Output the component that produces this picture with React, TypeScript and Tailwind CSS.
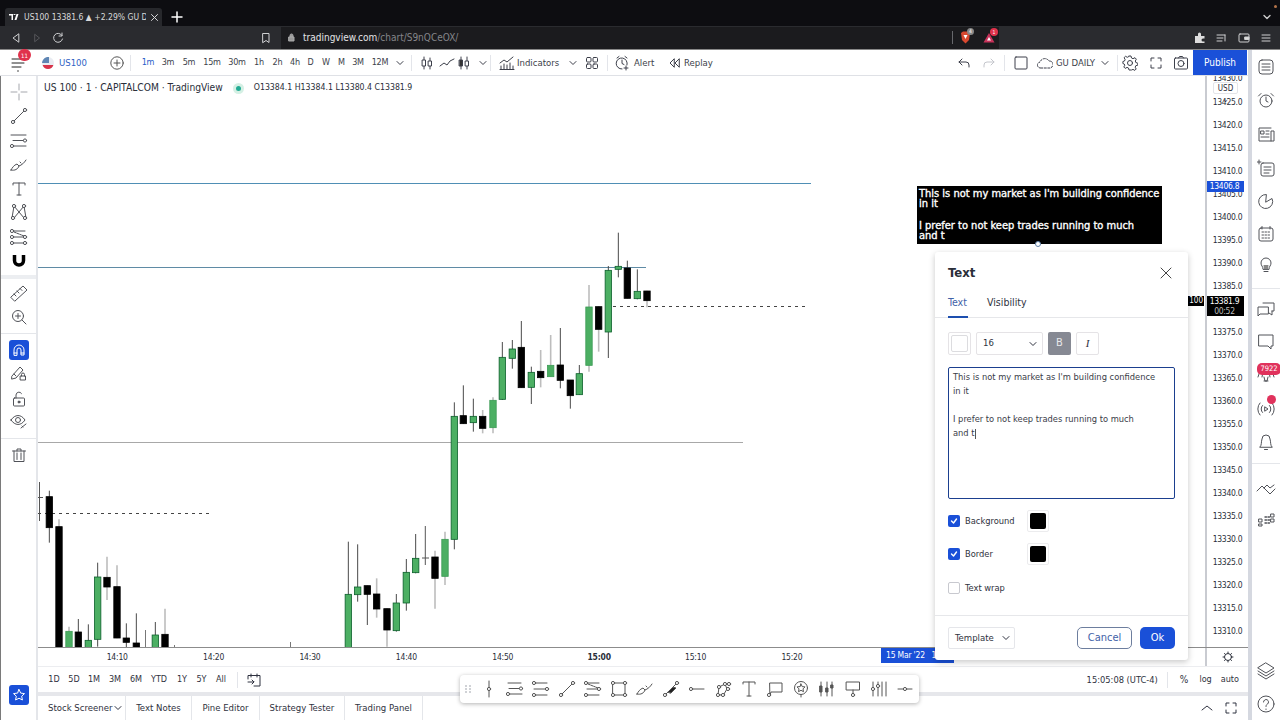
import React from "react";

const Ic = ({ s = 20, c = "", children, vb }: { s?: number; c?: string; children: React.ReactNode; vb?: string }) => (
  <svg width={s} height={s} viewBox={vb || `0 0 ${s} ${s}`} fill="none" stroke="currentColor" strokeWidth={1} strokeLinecap="round" strokeLinejoin="round" className={"shrink-0 " + c}>
    {children}
  </svg>
);
const Dot = ({ x, y, r = 1.6 }: { x: number; y: number; r?: number }) => <circle cx={x} cy={y} r={r} fill="#fff" />;

type C = [number, number, number, number, number, string, number?];
const zoomA: C[] = [
  [25, 935, 1250, 1093, 1260, "g"], [53, 943, 1115, 1071, 1094, "g"], [82, 1067, 1185, 1067, 1093, "b"], [110, 1045, 1163, 1092, 1137, "b", 1],
  [141, 1135, 1250, 1136, 1200, "b", 1], [169, 1092, 1205, 1119, 1202, "g"], [199, 987, 1142, 1027, 1119, "g"], [227, 912, 1030, 985, 1028, "g"],
  [285, 962, 1136, 981, 1045, "b", 1], [315, 905, 1065, 928, 1039, "g", 1], [343, 517, 958, 559, 928, "g"], [370, 466, 582, 557, 581, "b"],
  [400, 506, 605, 559, 578, "g"], [428, 540, 610, 559, 595, "b", 1], [459, 502, 610, 511, 593, "g", 1], [487, 336, 510, 382, 508, "g"],
  [517, 330, 416, 357, 385, "g"], [544, 273, 473, 352, 473, "b"], [574, 410, 522, 427, 472, "g"], [602, 360, 472, 424, 443, "b", 1],
  [632, 315, 440, 406, 440, "g", 1], [661, 294, 475, 405, 451, "b"], [691, 450, 536, 450, 497, "b"], [718, 405, 495, 431, 494, "g"],
  [747, 165, 425, 231, 406, "g", 1], [776, 228, 365, 230, 298, "b", 1], [805, 108, 384, 121, 306, "g"], [835, 8, 142, 109, 118, "g"],
  [862, 92, 205, 114, 205, "b"], [892, 118, 208, 184, 206, "g"], [921, 182, 232, 183, 212, "b", 1],
];
const zoomB: C[] = [
  [148, 32, 188, 50, 143, "b"], [177, 118, 510, 140, 510, "b", 1], [207, 440, 510, 454, 510, "g", 1], [235, 417, 510, 456, 510, "b"],
  [265, 433, 510, 481, 510, "g"], [293, 248, 500, 291, 478, "g"], [321, 230, 360, 292, 321, "b", 1], [351, 256, 475, 320, 474, "b", 1],
  [379, 430, 510, 474, 487, "b"], [409, 400, 510, 489, 510, "b"], [466, 426, 510, 465, 510, "g"], [495, 386, 510, 463, 510, "b", 1],
];
const candles: C[] = [
  ...zoomA.map(([x, a, b, d, e, k, l]) => [x / 3 + 340, a / 3 + 230, b / 3 + 230, d / 3 + 230, e / 3 + 230, k, l] as C),
  ...zoomB.map(([x, a, b, d, e, k, l]) => [x / 3, a / 3 + 480, b / 3 + 480, d / 3 + 480, e / 3 + 480, k, l] as C),
];

const Chart = () => (
  <svg viewBox="38 76 1167 571" className="block w-full h-full">
    <line x1="38" x2="811" y1="183.5" y2="183.5" stroke="#4f8fb5" />
    <line x1="38" x2="646" y1="267.5" y2="267.5" stroke="#5f8ba5" />
    <line x1="38" x2="743" y1="442.5" y2="442.5" stroke="#a8a8a8" />
    <line x1="613" x2="808" y1="306.5" y2="306.5" stroke="#444" strokeDasharray="3 4" />
    <line x1="38" x2="210" y1="513.5" y2="513.5" stroke="#444" strokeDasharray="3 4" />
    <path d="M39.500 482V521M38 497.500H43" stroke="#555" />
    <path d="M145.500 630V648M290.500 642V648M174.500 645V648" stroke="#777" />
    <path d="M425.300 526V565M422 558H429" stroke="#555" />
    {candles.map(([x, a, b, d, e, k, l], i) => (
      <g key={i}>
        <line x1={x} x2={x} y1={a} y2={b} stroke={l ? "#bdbdbd" : "#4a4a4a"} strokeWidth={l ? 1.6 : 1} />
        <rect x={x - 3.2} y={d} width={6.4} height={Math.max(e - d, 1)} fill={k === "g" ? "#4caf63" : "#000"} stroke={k === "g" ? (l ? "#3c9a55" : "#0b5f2b") : "#000"} strokeWidth={0.8} />
      </g>
    ))}
  </svg>
);

const Sep = ({ c = "" }: { c?: string }) => <div className={"w-px h-[16px] bg-[#e3e5ea] shrink-0 " + c} />;
const Chev = ({ c = "" }: { c?: string }) => (
  <Ic s={8} c={c}><path d="M1 2.500l3 3 3-3" /></Ic>
);

const TF: [string, string][] = [
  ["1m", "w-[20px] text-[#2a5cc8]"], ["3m", "w-[20px]"], ["5m", "w-[22px]"], ["15m", "w-[24px]"], ["30m", "w-[26px]"], ["1h", "w-[18px]"],
  ["2h", "w-[19px]"], ["4h", "w-[16px]"], ["D", "w-[15px]"], ["W", "w-[16px]"], ["M", "w-[15px]"], ["3M", "w-[18px]"], ["12M", "w-[26px]"],
];

const TopBar = () => (
  <div className="h-[26px] flex items-center bg-white border-b border-[#dfe1e6] text-[#3c3f4a] text-[9px] shrink-0 relative">
    <div className="w-[8px]" />
    <div className="w-[20px] flex justify-center text-[#222]">
      <Ic s={16}><path d="M2 4h12M2 8h12M2 12h9" /></Ic>
    </div>
    <div className="w-[14px]" />
    <svg width="12" height="12" viewBox="0 0 12 12" className="shrink-0">
      <circle cx="6" cy="6" r="6" fill="#e9ecf2" />
      <path d="M0.6 8h10.8A6 6 0 0 1 6 12 6 6 0 0 1 .6 8z" fill="#d8334a" />
      <path d="M1 3A6 6 0 0 1 7 0v6H0A6 6 0 0 1 1 3z" fill="#5f86b4" />
    </svg>
    <span className="ml-[5px] w-[51px] text-[9.500px] text-[#2f5fc4] pt-[1px]">US100</span>
    <div className="text-[#555]"><Ic s={14}><circle cx="7" cy="7" r="6.200" /><path d="M7 4v6M4 7h6" /></Ic></div>
    <div className="w-[6px]" /><Sep />
    <div className="w-[7px]" />
    {TF.map(([t, c]) => <span key={t} className={"text-center tracking-[-0.2px] pt-[1px] " + c}>{t}</span>)}
    <Chev c="ml-[3px]" />
    <div className="w-[7px]" /><Sep />
    <div className="w-[7px] " />
    <Ic s={16}><path d="M5 2v12M11 3v11" /><rect x="3.500" y="5" width="3" height="6" fill="#fff" /><rect x="9.500" y="6" width="3" height="5" fill="#fff" /></Ic>
    <div className="w-[4px]" />
    <Ic s={16}><path d="M1 11l4-3 3 2 3-4 4-2" /></Ic>
    <div className="w-[1px]" />
    <Ic s={16}><path d="M5 2v12M11 2v12" /><rect x="3.500" y="5" width="3" height="6" fill="#333" /><rect x="9.500" y="6" width="3" height="5" fill="#fff" /></Ic>
    <div className="w-[7px]" />
    <Chev />
    <div className="w-[3px]" /><Sep />
    <div className="w-[8px]" />
    <Ic s={16}><path d="M1 8l4-3 3 2 6-5M2 14v-3M5 14v-5M8 14v-4M11 14V8M14 14v-3M1 14.500h14" /></Ic>
    <span className="ml-[1px] w-[50px] text-[9.500px] pl-[1px] pt-[1px]">Indicators</span>
    <Chev c="ml-[3px]" />
    <div className="w-[8px]" />
    <Ic s={14}><rect x="1.500" y="1.500" width="4.500" height="4.500" rx="1" /><rect x="8" y="1.500" width="4.500" height="4.500" rx="1" /><rect x="1.500" y="8" width="4.500" height="4.500" rx="1" /><rect x="8" y="8" width="4.500" height="4.500" rx="1" /></Ic>
    <div className="w-[8px]" /><Sep />
    <div className="w-[6px]" />
    <Ic s={16}><path d="M13 10a5.500 5.500 0 1 0-5 4M8 5v3.500l2 1M3 3l2-1.500M13 3l-2-1.500M12 11v4M10 13h4" /></Ic>
    <span className="ml-[4px] w-[33px] text-[9.500px] pt-[1px]">Alert</span>
    <Ic s={14}><path d="M7 3L3 7l4 4zM12 3L8 7l4 4z" /></Ic>
    <span className="ml-[3px] text-[9.500px] pt-[1px]">Replay</span>
    <div className="ml-auto flex items-center h-full">
      <Ic s={14}><path d="M5 3L2 6l3 3M2 6h7a3 3 0 0 1 3 3v2" /></Ic>
      <div className="w-[11px]" />
      <Ic s={14} c="text-[#c4c6cc]"><path d="M9 3l3 3-3 3M12 6H5a3 3 0 0 0-3 3v2" /></Ic>
      <div className="w-[8px]" /><Sep />
      <div className="w-[9px]" />
      <Ic s={14}><rect x="1" y="1" width="12" height="12" rx="1" /></Ic>
      <div className="w-[9px]" />
      <Ic s={16}><path strokeDasharray="2 1.500" d="M4 13a3 3 0 0 1-1-6 5 5 0 0 1 9-1 3.500 3.500 0 0 1 1 7z" /></Ic>
      <span className="ml-[3px] text-[9.500px] pt-[1px]">GU DAILY</span>
      <Chev c="ml-[6px]" />
      <div className="w-[8px]" /><Sep />
      <div className="w-[4px]" />
      <Ic s={16}><circle cx="8" cy="8" r="2.500" /><path d="M7 1h2l.5 2 1.500.7 2-1 1.300 1.500-1 1.800.5 1.500 2 .7v2l-2 .5-.6 1.500 1 1.800-1.400 1.400-1.800-1-1.500.6L9 15H7l-.5-2-1.500-.6-1.800 1-1.400-1.400 1-1.800L2.200 9 .9 8.500v-2l1.600-.5.6-1.500-1-1.800L3.500 1.300l1.800 1 1.200-.6z" /></Ic>
      <div className="w-[10px]" />
      <Ic s={16}><path d="M3 6V3h3M10 3h3v3M13 10v3h-3M6 13H3v-3" /></Ic>
      <div className="w-[9px]" />
      <Ic s={16}><rect x="1.500" y="3" width="13" height="11" rx="1" /><circle cx="8" cy="8.500" r="3" /><path d="M5.500 3l1-1.500h3l1 1.500" /></Ic>
      <div className="w-[4px]" />
      <div className="w-[54px] h-full bg-[#1a50d8] text-white text-[10px] flex items-center justify-center">Publish</div>
      <div className="w-[1px]" />
    </div>
    <span className="absolute left-[18px] top-[-1px] w-[13px] h-[12px] rounded-full bg-[#e0324c] text-white text-[6px] flex items-center justify-center">11</span>
    <span className="absolute left-[17px] top-[20px] w-[2px] h-[2px] rounded-full bg-[#888]" />
  </div>
);

const LeftBtn = ({ h, children, c = "" }: { h: string; children: React.ReactNode; c?: string }) => (
  <div className={"flex items-center justify-center shrink-0 " + h + " " + c}>{children}</div>
);

const LeftRail = () => (
  <div className="w-[38px] shrink-0 flex flex-col bg-white border-l border-[#7a7a7a] border-r-2 border-r-[#e4e6ea] text-[#505258] relative">
    <LeftBtn h="h-[24px] mt-[4px]" c="text-[#a5a7ad]"><Ic s={18}><path d="M9 1v6M9 11v6M1 9h6M11 9h6" /></Ic></LeftBtn>
    <LeftBtn h="h-[24px]"><Ic s={18}><path d="M3 15L15 3" /><Dot x={3} y={15} /><Dot x={15} y={3} /></Ic></LeftBtn>
    <LeftBtn h="h-[25px]"><Ic s={18}><path d="M1 3h15M3 8.500h11M3 14h13" /><Dot x={15} y={8.500} /><Dot x={2} y={14} /></Ic></LeftBtn>
    <LeftBtn h="h-[24px]"><Ic s={18}><path d="M1 14c4 1 7-1 8-4L7 8C4 9 2 12 1 14zM9 10c3-1 5-3 7-6M10 6l1 1" /></Ic></LeftBtn>
    <LeftBtn h="h-[23px]"><Ic s={16}><path d="M2 4V2h12v2M8 2v12M6 14h4" /></Ic></LeftBtn>
    <LeftBtn h="h-[24px]"><Ic s={18}><path d="M4 3l10 12M14 3L4 15M4 3L2 15M14 3l2 12" /><Dot x={4} y={3} /><Dot x={14} y={3} /><Dot x={3} y={15} /><Dot x={15} y={15} /></Ic></LeftBtn>
    <LeftBtn h="h-[25px]"><Ic s={18}><path d="M3 3h12M3 9h12M3 15h12" /><path d="M4 4l10 4" strokeDasharray="2 1" /><Dot x={2} y={3} /><Dot x={2} y={9} /><Dot x={2} y={15} /><Dot x={15} y={9} /><Dot x={15} y={15} /></Ic></LeftBtn>
    <LeftBtn h="h-[24px]"><svg width="14" height="14" viewBox="0 0 14 14" fill="none"><path d="M2.500 1v5.500a4.500 4.500 0 0 0 9 0V1" stroke="#000" strokeWidth="3.500" /></svg></LeftBtn>
    <div className="h-[4px] bg-[#eceef1] mt-[2px] shrink-0" />
    <LeftBtn h="h-[28px]"><Ic s={20}><path d="M2 14L14 3l4 4L6 18zM5 11l2 2M8 8l2 2M11 5.500l2 2" /></Ic></LeftBtn>
    <LeftBtn h="h-[20px]"><Ic s={16}><circle cx="7" cy="7" r="5.500" /><path d="M7 4.500v5M4.500 7h5M11 11l4 4" /></Ic></LeftBtn>
    <div className="h-px bg-[#e4e6ea] mt-[6px] shrink-0" />
    <LeftBtn h="h-[20px] mt-[6px]"><div className="w-[20px] h-[20px] rounded-[3px] bg-[#1a50d8] flex items-center justify-center text-white"><Ic s={14}><path d="M2 12V7a5 5 0 0 1 10 0v5H9V7a2 2 0 0 0-4 0v5zM2 10h3M9 10h3" /></Ic></div></LeftBtn>
    <LeftBtn h="h-[26px]"><Ic s={18}><path d="M2 12L10 3l3 3-7 8-4 1zM4 10l2 2" /><rect x="10.500" y="12" width="5" height="4" /><path d="M11.500 12v-1.500a1.500 1.500 0 0 1 3 0V12" /></Ic></LeftBtn>
    <LeftBtn h="h-[26px]"><Ic s={16}><rect x="2.500" y="7" width="11" height="8" rx="1" /><path d="M5 7V4a3 3 0 0 1 5.500-1.500" /><circle cx="8" cy="11" r="1" fill="currentColor" /></Ic></LeftBtn>
    <LeftBtn h="h-[18px]"><Ic s={18}><path d="M1 8c4-6 10-6 14 0-4 6-10 6-14 0z" /><circle cx="8" cy="8" r="2.500" /><path d="M11 16l5-4M12 14l1 1" /></Ic></LeftBtn>
    <div className="h-px bg-[#e4e6ea] mt-[8px] shrink-0" />
    <LeftBtn h="h-[32px]"><Ic s={16}><path d="M3 4v10.500h10V4M1.500 4h13M6 4V2h4v2M6 6v6.500M10 6v6.500" /></Ic></LeftBtn>
    <div className="flex-1" />
    <LeftBtn h="h-[20px] mb-[15px]"><div className="w-[20px] h-[20px] rounded-[3px] bg-[#1a50d8] flex items-center justify-center text-white"><Ic s={14}><path d="M7 1.500l1.700 3.600 3.800.5-2.800 2.600.7 3.800L7 10.200 3.600 12l.7-3.800L1.500 5.600l3.800-.5z" /></Ic></div></LeftBtn>
  </div>
);

const RightRail = () => (
  <div className="w-[28px] shrink-0 flex flex-col bg-white text-[#505258] items-center">
    <LeftBtn h="h-[33px]"><Ic s={18}><rect x="2" y="2" width="14" height="14" rx="3" /><path d="M5 6h8M5 9h8M5 12h8" /></Ic></LeftBtn>
    <LeftBtn h="h-[34px]"><Ic s={18}><circle cx="9" cy="10" r="6" /><path d="M9 6v4l2 1M1.500 5L4 2.500M16.500 5L14 2.500" /></Ic></LeftBtn>
    <LeftBtn h="h-[34px]"><Ic s={18}><path d="M14 3H2v13h15V6h-3v10" /><path d="M4 6h3v3H4zM9 6h3M9 9h3M4 12h8" /></Ic></LeftBtn>
    <LeftBtn h="h-[33px]"><Ic s={18}><rect x="4" y="4" width="13" height="13" rx="2" /><path d="M7 8h7M7 11h7M7 14h5M2 1v4M0 3h4" /></Ic></LeftBtn>
    <LeftBtn h="h-[33px]"><Ic s={18}><path d="M9 2.500a7 7 0 1 0 6 4L9 10z" /></Ic></LeftBtn>
    <LeftBtn h="h-[33px]"><Ic s={18}><rect x="2" y="3" width="14" height="13" rx="2" /><path d="M5 1.500V4M13 1.500V4" /><path strokeDasharray="1.500 1.500" d="M5 7h9M5 10h9M5 13h9" /></Ic></LeftBtn>
    <LeftBtn h="h-[30px]"><Ic s={18}><path d="M6 13c0-3-2-3-2-6a5 5 0 0 1 10 0c0 3-2 3-2 6zM7 15.500h4" /><path d="M6.500 9h5l-.500 4H7z" fill="#888" stroke="none" /></Ic></LeftBtn>
    <div className="w-full h-px bg-[#e4e6ea] mt-[8px] shrink-0" />
    <LeftBtn h="h-[32px] mt-[5px]"><Ic s={20}><path d="M7 3h11v8h-2M12 7H2v9l2-2h8z" /><path d="M16 11v4l-3-2" /></Ic></LeftBtn>
    <LeftBtn h="h-[32px]"><Ic s={18}><path d="M2 2h14v11h-2v3l-3-3H2z" /></Ic></LeftBtn>
    <LeftBtn h="h-[30px] relative"><Ic s={20}><path d="M4 8l-2 6M7 9l-1 5M13 9l1 5M16 8l2 6M8 14l1 4h2l1-4M8 18h4" /></Ic><span className="absolute left-[1px] top-[5px] w-[24px] h-[12px] rounded-[5px] bg-[#e0325c] text-white text-[7.500px] leading-[12px] text-center">7922</span></LeftBtn>
    <LeftBtn h="h-[42px] relative"><Ic s={20}><path d="M4 4a9 9 0 0 0 0 12M16 4a9 9 0 0 1 0 12M6.500 6.500a5 5 0 0 0 0 7M13.500 6.500a5 5 0 0 1 0 7M9 8l3 2-3 2z" /></Ic><span className="absolute right-[0px] top-[7px] w-[9px] h-[9px] rounded-full bg-[#e0325c]" /></LeftBtn>
    <LeftBtn h="h-[26px]"><Ic s={18}><path d="M3 13c2-2 1-5 2-8a4 4 0 0 1 8 0c1 3 0 6 2 8zM7.500 15.500h3" /></Ic></LeftBtn>
    <div className="w-full h-px bg-[#e4e6ea] mt-[7px] shrink-0" />
    <LeftBtn h="h-[26px] mt-[14px]"><Ic s={20}><path d="M1 10l5-5 5 5M8 7l3-3 3 3 4-3M11 10l3 3 5-5" /></Ic></LeftBtn>
    <LeftBtn h="h-[27px]"><Ic s={18}><path strokeDasharray="1.500 1.500" strokeWidth={1.400} d="M8 8h5M8 11h5M8 14h5" /><rect x="14" y="5" width="3" height="3" /><rect x="14" y="10" width="3" height="3" /><rect x="2" y="10" width="3" height="3" /><rect x="2" y="15" width="3" height="2" /></Ic></LeftBtn>
    <div className="flex-1" />
    <LeftBtn h="h-[34px]"><Ic s={20}><path d="M10 2l8 5-8 5-8-5zM2 10l8 5 8-5M2 13l8 5 8-5" /></Ic></LeftBtn>
    <LeftBtn h="h-[32px]"><Ic s={20}><circle cx="10" cy="10" r="8" /><path d="M7.500 8a2.500 2.500 0 1 1 4 2c-1 .7-1.500 1-1.500 2.500M10 15v.5" /></Ic></LeftBtn>
  </div>
);

const prices = Array.from({ length: 24 }, (_, i) => (13425 - i * 5).toFixed(1));
const times = ["14:10", "14:20", "14:30", "14:40", "14:50", "15:00", "15:10", "15:20"];
const ranges: [string, string][] = [
  ["1D", "w-[20px]"], ["5D", "w-[20px]"], ["1M", "w-[20px]"], ["3M", "w-[22px]"], ["6M", "w-[20px]"], ["YTD", "w-[26px]"], ["1Y", "w-[20px]"], ["5Y", "w-[19px]"], ["All", "w-[20px]"],
];
const tabs: [string, string][] = [
  ["Text Notes", "w-[66px]"], ["Pine Editor", "w-[68px]"], ["Strategy Tester", "w-[85px]"], ["Trading Panel", "w-[78px]"],
];

const floatIcons: React.ReactNode[] = [
  <><path d="M9 1v16" /><Dot x={9} y={9} /></>,
  <><path d="M2 3h13M3 8.500h11M3 14h13" /><Dot x={15} y={8.500} /><Dot x={2} y={14} /></>,
  <><path d="M2 3h13M2 15h13M2 9h13" /><Dot x={2} y={3} /><Dot x={15} y={9} /><Dot x={2} y={15} /></>,
  <><path d="M3 15L15 3" /><Dot x={3} y={15} /><Dot x={15} y={3} /></>,
  <><path d="M3 3h12M3 9h12M3 15h12" /><path d="M4 4l10 4" strokeDasharray="2 1" /><Dot x={2} y={3} /><Dot x={15} y={9} /><Dot x={2} y={15} /></>,
  <><rect x="3" y="3" width="12" height="12" /><Dot x={3} y={3} /><Dot x={15} y={3} /><Dot x={3} y={15} /><Dot x={15} y={15} /></>,
  <><path d="M1 14c4 1 7-1 8-4L7 8C4 9 2 12 1 14zM9 10c3-1 5-3 7-6M10 6l1 1" /></>,
  <><path d="M3 15L15 3" /><path d="M6 12l6-6-1 1 3 1-5 5z" fill="#222" /><Dot x={3} y={15} /><Dot x={15} y={3} /></>,
  <><path d="M3 9h13" /><Dot x={3} y={9} /></>,
  <><path d="M4 15l1-8 6-3 2 5-3 5z" /><Dot x={4} y={15} /><Dot x={5} y={7} /><Dot x={11} y={4} /><Dot x={15} y={4} /><Dot x={14} y={9} /><Dot x={9} y={15} /></>,
  <><path d="M3 4V2h12v2M9 2v14M7 16h4" /></>,
  <><path d="M4 3h12v9H5l-1 3z" /><Dot x={3} y={15} /></>,
  <><circle cx="9" cy="8" r="6.500" /><path d="M9 4l1.200 2.600 2.800.3-2 2 .5 2.800L9 10.300 6.500 11.700 7 8.900l-2-2 2.800-.3zM9 14.500V17" /></>,
  <><path d="M3 2v14M9 2v14M14 2v14" /><rect x="2" y="6" width="2" height="6" fill="#555" /><rect x="8" y="8" width="2" height="4" fill="#555" /><rect x="13" y="5" width="2" height="3" fill="#555" /></>,
  <><rect x="2.500" y="2" width="13" height="8" /><path d="M9 10v5" /><Dot x={9} y={15} /></>,
  <><path d="M3 2v14M8 2v14M12 2v14M16 2v14" /><Dot x={3} y={9} /><Dot x={8} y={6} /></>,
  <><path d="M2 9h14" /><Dot x={9} y={9} /></>,
];

function Check({ on }: { on?: boolean }) {
  return on ? (
    <div className="w-[12px] h-[12px] rounded-[2px] bg-[#1a50d8] flex items-center justify-center text-white"><Ic s={8}><path d="M1.500 4l2 2 3-4" strokeWidth={1.400} /></Ic></div>
  ) : <div className="w-[12px] h-[12px] rounded-[2px] border border-[#c8c9cf]" />;
}
function Swatch() {
  return <div className="w-[22px] h-[22px] border border-[#ececee] rounded-[2px] flex items-center justify-center"><div className="w-[16px] h-[16px] rounded-[2px] bg-black" /></div>;
}

const Dialog = () => (
  <div className="absolute left-[935px] top-[252px] w-[253px] h-[408px] bg-white rounded-[3px] shadow-[0_2px_6px_rgba(0,0,0,0.22)] flex flex-col text-[#2f3240]">
    <div className="h-[41px] flex items-center justify-between pl-[13px] pr-[15px] shrink-0">
      <span className="text-[13px] font-bold text-[#2a2e39]">Text</span>
      <Ic s={14} c="text-[#444]"><path d="M2 2l10 10M12 2L2 12" /></Ic>
    </div>
    <div className="h-[25px] flex items-start pl-[13px] border-b border-[#e6e7ea] text-[10.500px] shrink-0 relative pt-[2px]">
      <span className="text-[#3f62a8] w-[39px]">Text</span>
      <span>Visibility</span>
      <span className="absolute left-[13px] bottom-[-1px] w-[20px] h-[2px] bg-[#1d4faf]" />
    </div>
    <div className="flex items-center gap-[5px] pl-[13px] mt-[14px] shrink-0">
      <div className="w-[23px] h-[23px] border border-[#e5e3e6] rounded-[2px] flex items-center justify-center"><div className="w-[17px] h-[17px] border border-[#dcdcdf] rounded-[2px]" /></div>
      <div className="w-[67px] h-[23px] border border-[#e5e3e6] rounded-[2px] flex items-center justify-between pl-[6px] pr-[4px] text-[9.500px]"><span>16</span><Ic s={10}><path d="M2 3.500l3 3 3-3" /></Ic></div>
      <div className="w-[23px] h-[23px] bg-[#868993] rounded-[2px] text-[#e8e8ea] text-[11px] flex items-center justify-center">B</div>
      <div className="w-[23px] h-[23px] border border-[#e5e3e6] rounded-[2px] text-[11px] flex items-center justify-center font-['Liberation_Serif'] italic">I</div>
    </div>
    <div className="ml-[13px] mt-[12px] w-[227px] h-[132px] border-[1.500px] border-[#1b3f8f] rounded-[2px] pl-[4px] pt-[2px] text-[9.250px] leading-[14px] shrink-0 text-[#3a3d48] whitespace-nowrap">
      <p>This is not my market as I'm building confidence</p>
      <p>in it</p>
      <p className="h-[14px]" />
      <p>I prefer to not keep trades running to much</p>
      <p>and t<span className="inline-block w-px h-[10px] bg-[#555] align-middle" /></p>
    </div>
    <div className="flex items-center h-[22px] pl-[13px] mt-[11px] text-[9.250px] shrink-0">
      <Check on /><span className="ml-[5px] w-[62px]">Background</span><Swatch />
    </div>
    <div className="flex items-center h-[22px] pl-[13px] mt-[11px] text-[9.250px] shrink-0">
      <Check on /><span className="ml-[5px] w-[62px]">Border</span><Swatch />
    </div>
    <div className="flex items-center h-[22px] pl-[13px] mt-[12px] text-[9.250px] shrink-0">
      <Check /><span className="ml-[5px]">Text wrap</span>
    </div>
    <div className="mt-auto h-[45px] border-t border-[#e6e7ea] flex items-center pl-[13px] pr-[13px] shrink-0">
      <div className="w-[67px] h-[22px] border border-[#e5e6ea] rounded-[2px] flex items-center justify-between pl-[6px] pr-[3px] text-[9.500px]"><span>Template</span><Ic s={10}><path d="M2 3.500l3 3 3-3" /></Ic></div>
      <div className="ml-auto w-[55px] h-[22px] border border-[#6d7e9e] rounded-[5px] flex items-center justify-center text-[11px] text-[#3f62a8]">Cancel</div>
      <div className="ml-[8px] w-[35px] h-[22px] bg-[#1a50d8] rounded-[5px] flex items-center justify-center text-[11px] text-white">Ok</div>
    </div>
  </div>
);

export default function App() {
  return (
    <div className="w-[1280px] h-[720px] relative overflow-hidden flex flex-col bg-white font-['DejaVu_Sans_Condensed','DejaVu_Sans',sans-serif] text-[#2f3240]">
      <div className="h-[26px] bg-[#0d0d11] flex items-end shrink-0 relative text-[#d8d8da]">
        <div className="ml-[5px] w-[157px] h-[18px] bg-[#27282c] rounded-t-[3px] flex items-center pl-[4px] text-[8.550px]">
          <svg width="11" height="7" viewBox="0 0 11 7" className="shrink-0"><path d="M0 0h4v6H2.500V1.500H0zM5.500 1a1 1 0 1 1 .01 0M7.500 0H9.500L7.500 6H5.500z" fill="#fff" /></svg>
          <span className="ml-[4px] w-[122px] whitespace-nowrap overflow-hidden">US100 13381.6 ▲ +2.29% GU D</span>
          <Ic s={9} c="ml-[4px]"><path d="M1.500 1.500l6 6M7.500 1.500l-6 6" /></Ic>
        </div>
        <Ic s={12} c="ml-[9px] mb-[3px] text-white"><path d="M6 1v10M1 6h10" strokeWidth={1.500} /></Ic>
        <div className="ml-auto mr-[8px] mb-[4px]"><Ic s={10} c="text-[#ccc]"><path d="M2 3.500l3 3 3-3" strokeWidth={1.400} /></Ic></div>
        <span className="absolute right-[3px] top-[5px] w-[3px] h-[3px] rounded-full bg-[#b5744a]" />
      </div>
      <div className="h-[23px] bg-[#2a2b2f] flex items-center shrink-0 text-[#cfd0d2]">
        <div className="w-[32px] flex justify-center"><Ic s={12}><path d="M8.500 2L3 6l5.500 4z" /></Ic></div>
        <div className="w-[10px] flex justify-center text-[#55565a]"><Ic s={10}><path d="M3 1.500L7.500 5 3 8.500z" /></Ic></div>
        <div className="w-[32px] flex justify-center"><Ic s={12}><path d="M10 3.500A4.500 4.500 0 1 0 10.500 7M10 1v3H7" /></Ic></div>
        <div className="w-[200px] flex justify-end pr-[2px]"><Ic s={12}><path d="M3 1.500h6v9l-3-2-3 2z" /></Ic></div>
        <div className="ml-[7px] w-[718px] h-[22px] bg-[#1b1b1e] flex items-center pl-[6px] text-[10px]">
          <Ic s={9} c="text-[#aaa]"><path d="M2 4h5v4H2zM3 4V2.500a1.500 1.500 0 0 1 3 0V4" fill="#999" /></Ic>
          <span className="ml-[7px] text-[#e4e4e6]">tradingview.com</span><span className="text-[#85868a]">/chart/S9nQCeOX/</span>
          <div className="ml-auto flex items-center pr-[4px]">
            <span className="w-px h-[13px] bg-[#67686c]" />
            <div className="relative ml-[7px] h-[13px]">
              <svg width="11" height="13" viewBox="0 0 11 13" className="block"><path d="M1 2l2-1.500h5L10 2l-1 7-3.500 3.500L2 9z" fill="#d9482f" /><path d="M3.500 4h4l-2 4z" fill="#fff" /></svg>
              <span className="absolute left-[7px] top-[-3px] w-[7px] h-[7px] rounded-full bg-[#888] text-white text-[5px] text-center leading-[7px]">4</span>
            </div>
            <div className="relative ml-[12px] h-[11px]">
              <svg width="12" height="11" viewBox="0 0 12 11" className="block"><path d="M6 1l5.500 9.500H.5z" fill="#c8325a" /><path d="M6 5l2 3.500H4z" fill="#fff" /></svg>
              <span className="absolute left-[7px] top-[-4px] w-[8px] h-[8px] rounded-full bg-[#e0324c] text-white text-[5px] text-center leading-[8px]">1</span>
            </div>
          </div>
        </div>
        <div className="ml-auto flex items-center pr-[8px]">
          <svg width="12" height="12" viewBox="0 0 12 12" className="shrink-0"><path d="M1 4h3V2a1.500 1.500 0 0 1 3 0v2h3.500v2.500H9a1.500 1.500 0 0 0 0 3h1.500V11H1z" fill="#ddd" /></svg>
          <Ic s={12} c="ml-[10px]"><path d="M1 3h8M1 6h6M1 9h5M9 3v6" /></Ic>
          <Ic s={12} c="ml-[10px]"><rect x="1" y="2" width="10" height="8" rx="1" /><path d="M7 5h4v2.500H7z" fill="#ddd" /></Ic>
          <Ic s={12} c="ml-[10px]"><path d="M2 3h8M2 6h8M2 9h8" /></Ic>
        </div>
      </div>
      <div className="h-px bg-[#888] shrink-0" />
      <div className="flex-1 flex min-h-0">
        <div className="w-[1248px] shrink-0 flex flex-col min-w-0">
          <TopBar />
          <div className="flex-1 flex min-h-0">
            <LeftRail />
            <div className="flex-1 flex flex-col min-w-0">
              <div className="flex-1 flex min-h-0 border-b border-[#8c8c8c]">
                <div className="flex-1 relative min-w-0">
                  <Chart />
                  <div className="absolute left-[6px] top-[6px] flex items-center h-[12px] whitespace-nowrap text-[#2a2e39]">
                    <span className="text-[10.200px]">US 100 · 1 · CAPITALCOM · TradingView</span>
                    <span className="ml-[10px] w-[11px] h-[11px] rounded-full bg-[#d5f0e4] flex items-center justify-center"><span className="w-[5px] h-[5px] rounded-full bg-[#22ab94]" /></span>
                    <span className="ml-[10px] text-[8.700px]">O13384.1 H13384.1 L13380.4 C13381.9</span>
                  </div>
                </div>
                <div className="w-[43px] shrink-0 border-l-2 border-[#c9cbd1] relative text-[8.500px] tracking-[-0.3px] text-center text-[#2a2e39] overflow-hidden">
                  <div className="h-[23.040px] leading-[23px] -mt-[8.540px]">13430.0</div>
                  {prices.map((p) => <div key={p} className="h-[23.040px] leading-[23px]">{p}</div>)}
                  <div className="absolute left-[6px] top-[6px] w-[25px] h-[12px] bg-white border border-[#e3e4e8] rounded-[2px] text-[8px] leading-[11px] tracking-normal">USD ⌄</div>
                  <div className="absolute left-[-2px] top-[105px] w-[39px] h-[11px] bg-[#1a50d8] text-white leading-[11px]">13406.8</div>
                  <div className="absolute left-[-2px] top-[220px] w-[39px] h-[20px] bg-black text-white leading-[10px]">13381.9<br /><span className="text-[#bbb]">00:52</span></div>
                </div>
              </div>
              <div className="h-[19px] flex shrink-0 text-[8.500px] tracking-[-0.2px] text-[#2a2e39] border-b border-[#ecedf0] relative">
                <div className="flex-1 flex pl-[31px] items-center relative">
                  {times.map((t) => <span key={t} className={"w-[96.400px] text-center " + (t === "15:00" ? "font-bold" : "")}>{t}</span>)}
                  <span className="absolute left-[843px] top-0 h-[15px] w-[73px] bg-[#1a50d8] text-white leading-[15px] pl-[5px] whitespace-pre overflow-hidden">{"15 Mar '22   15:05"}</span>
                </div>
                <div className="w-[43px] border-l-2 border-[#c9cbd1] flex items-center justify-center"><Ic s={12}><circle cx="6" cy="6" r="3.500" /><path d="M6 1v1M6 10v1M1 6h1M10 6h1M2.500 2.500l.7.7M8.800 8.800l.7.7M9.500 2.500l-.7.7M3.200 8.800l-.7.7" /></Ic></div>
              </div>
              <div className="h-[25px] flex items-center shrink-0 text-[9px] pl-[6px] pr-[9px] whitespace-nowrap">
                {ranges.map(([r, c]) => <span key={r} className={"text-center " + c}>{r}</span>)}
                <div className="w-[6px]" /><Sep />
                <Ic s={14} c="ml-[9px]"><path d="M1 6V2.500h12V13H7M4 1v3M10 1v3M1 9h6l-2-2M7 9l-2 2" /></Ic>
                <div className="ml-auto flex items-center">
                  <span className="text-[9.250px]">15:05:08 (UTC-4)</span>
                  <div className="w-[9px]" /><Sep />
                  <span className="ml-[12px] text-[10px]">%</span>
                  <span className="ml-[11px]">log</span>
                  <span className="ml-[9px]">auto</span>
                </div>
              </div>
              <div className="h-[4px] bg-[#e6e7eb] shrink-0" />
              <div className="h-[24px] flex items-center shrink-0 text-[9.500px] pr-[11px] whitespace-nowrap">
                <div className="w-[88px] h-full flex items-center pl-[10px] border-r border-[#e4e6ea] justify-between pr-[3px]"><span>Stock Screener</span><Chev /></div>
                {tabs.map(([t, c]) => <div key={t} className={"h-full flex items-center justify-center border-r border-[#e4e6ea] " + c}>{t}</div>)}
                <div className="ml-auto flex items-center gap-[11px]">
                  <Ic s={14}><path d="M2 9l5-4 5 4" /></Ic>
                  <Ic s={12}><path d="M1 4V1h3M8 1h3v3M11 8v3H8M4 11H1V8" /></Ic>
                </div>
              </div>
            </div>
          </div>
        </div>
        <div className="w-[4px] shrink-0 bg-[#d5d8e0]" />
        <RightRail />
      </div>

      <div className="absolute left-[917px] top-[186px] w-[245px] h-[58px] bg-black text-white text-[11px] leading-[10.500px] pl-[2px] pt-[2.500px] [-webkit-text-stroke:0.35px_white]">
        <p className="whitespace-nowrap">This is not my market as I'm building confidence</p>
        <p>in it</p>
        <p className="h-[11px]" />
        <p className="whitespace-nowrap">I prefer to not keep trades running to much</p>
        <p>and t</p>
        <span className="absolute left-[118px] bottom-[-3px] w-[6px] h-[6px] rounded-full bg-white border border-[#5f7fa8]" />
      </div>
      <span className="absolute left-[1188px] top-[296px] w-[16px] h-[10px] bg-black text-white text-[8px] leading-[10px] text-right pr-[1px]">100</span>
      <Dialog />
      <div className="absolute left-[460px] top-[675px] w-[459px] h-[28px] bg-white rounded-[4px] shadow-[0_1px_4px_rgba(0,0,0,0.3)] flex items-center text-[#555]">
        <div className="w-[16px] flex justify-center"><svg width="6" height="8" viewBox="0 0 6 8" className="shrink-0"><path d="M0 0h2v2H0zM4 0h2v2H4zM0 3h2v2H0zM4 3h2v2H4zM0 6h2v2H0zM4 6h2v2H4z" fill="#d0d2d6" /></svg></div>
        {floatIcons.map((d, i) => <div key={i} className="w-[26px] flex justify-center"><Ic s={18}>{d}</Ic></div>)}
      </div>
    </div>
  );
}
